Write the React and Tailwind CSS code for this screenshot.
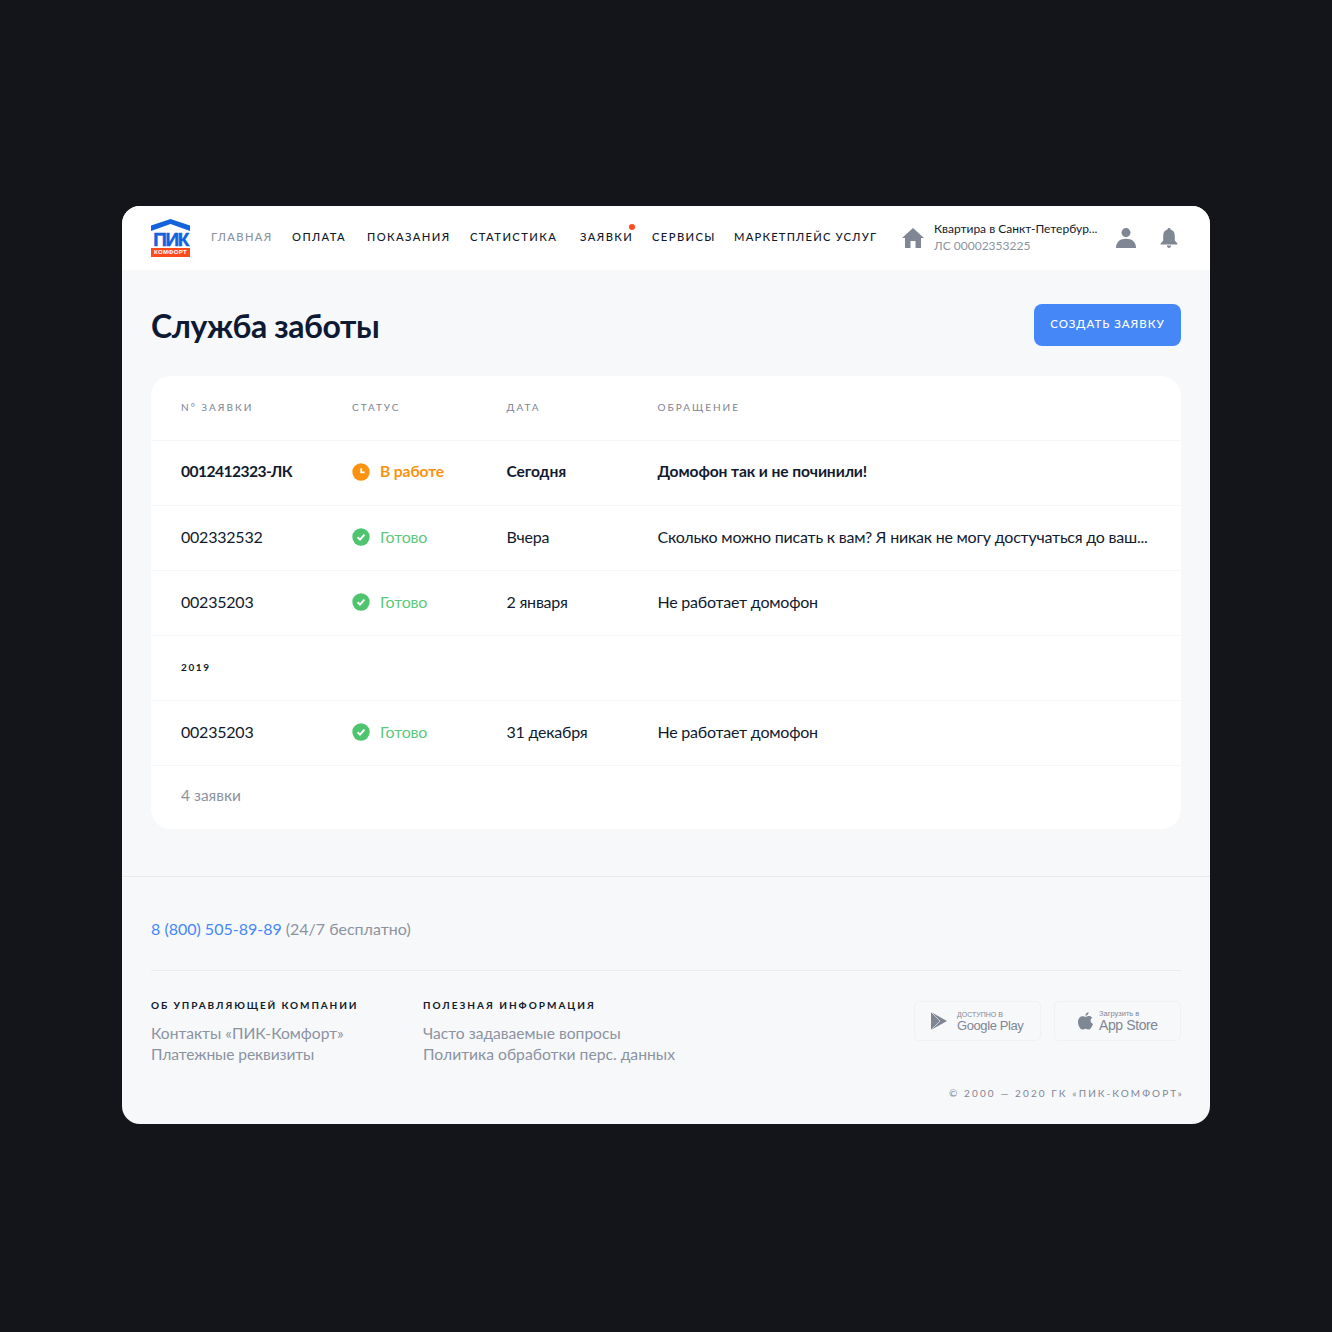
const font = "font-['Lato','Noto_Sans',sans-serif]";

const navItems = [
  { label: 'ГЛАВНАЯ', muted: true, width: 'w-[81px]' },
  { label: 'ОПЛАТА', width: 'w-[75px]' },
  { label: 'ПОКАЗАНИЯ', width: 'w-[103px]' },
  { label: 'СТАТИСТИКА', width: 'w-[110px]' },
  { label: 'ЗАЯВКИ', dot: true, width: 'w-[72px]' },
  { label: 'СЕРВИСЫ', width: 'w-[82px]' },
  { label: 'МАРКЕТПЛЕЙС УСЛУГ', tight: true, width: 'w-[144px]' },
];

function Logo() {
  return (
    <div className="flex w-[39px] shrink-0 flex-col items-center">
      <svg width="39" height="13" viewBox="0 0 39 13" className="block">
        <polygon points="0,6.5 19.5,0 39,6.5 39,12 19.5,5 0,12" fill="#1463dc" />
      </svg>
      <div className="mt-[1px] h-[14px] text-[19px] leading-[14px] font-bold tracking-[-1.4px] text-[#1463dc] [-webkit-text-stroke:0.5px_#1463dc] font-['Liberation_Sans',sans-serif]">ПИК</div>
      <div className="mt-[1px] h-[9px] w-[39px] bg-[#ff4a1c] text-center text-[6px] leading-[9px] font-bold tracking-[0.3px] text-white font-['Liberation_Sans',sans-serif]">КОМФОРТ</div>
    </div>
  );
}

function StatusIcon({ kind }) {
  if (kind === 'work') {
    return (
      <svg width="18" height="18" viewBox="0 0 18 18" className="shrink-0">
        <circle cx="9" cy="9" r="8.7" fill="#fb9210" />
        <path d="M9.2 5.2 V9.4 H12.6" fill="none" stroke="#fff" strokeWidth="1.8" />
      </svg>
    );
  }
  return (
    <svg width="18" height="18" viewBox="0 0 18 18" className="shrink-0">
      <circle cx="9" cy="9" r="8.7" fill="#4fc46f" />
      <path d="M5.6 9.2 L8 11.6 L12.4 6.6" fill="none" stroke="#fff" strokeWidth="2" />
    </svg>
  );
}

function Row({ id, kind, status, date, text, bold }) {
  return (
    <div className={`flex h-[65px] items-center border-t border-[#f4f5f7] px-[30px] whitespace-nowrap text-[#111a2e] ${bold ? 'pb-[2px] text-[15.6px] font-bold tracking-[-0.1px]' : 'pb-[3px] text-[16px] tracking-[-0.22px]'}`}>
      <div className={`w-[171px] shrink-0 ${bold ? 'tracking-[-0.55px]' : ''}`}>{id}</div>
      <div className={`flex w-[154.5px] shrink-0 items-center gap-[10px] ${kind === 'work' ? 'text-[#fb9210]' : 'text-[#5cc97c]'}`}>
        <StatusIcon kind={kind} />
        <span>{status}</span>
      </div>
      <div className="w-[151px] shrink-0">{date}</div>
      <div>{text}</div>
    </div>
  );
}

function Caption({ className, children }) {
  return <div className={`text-[10px] tracking-[2px] text-[#7c8493] ${className}`}>{children}</div>;
}

export default function App() {
  return (
    <div className={`flex h-[1332px] items-start justify-center bg-[#13151a] pt-[206px] ${font}`}>
      <div className="h-[918px] w-[1088px] overflow-hidden rounded-[18px] bg-[#f7f8fa]">
        <header className="flex h-[64px] items-center bg-white pl-[29px] pr-[32px]">
          <Logo />
          <nav className="ml-[21px] flex pb-[2px]">
            {navItems.map((item) => (
              <div key={item.label} className={`relative shrink-0 text-[11.2px] font-medium whitespace-nowrap ${item.width} ${item.tight ? 'tracking-[1.2px]' : 'tracking-[1.4px]'} ${item.muted ? 'text-[#8b93a1]' : 'text-[#111a2e]'}`}>
                {item.label}
                {item.dot && <span className="absolute -top-[5px] left-[49px] h-[6px] w-[6px] rounded-full bg-[#ff4a1c]" />}
              </div>
            ))}
          </nav>
          <div className="ml-auto flex items-center">
            <svg width="22" height="20" viewBox="0 0 22 20" className="shrink-0">
              <path d="M11 0 L0 10 H3 V20 H8.5 V13 H13.5 V20 H19 V10 H22 Z" fill="#7f8795" />
            </svg>
            <div className="ml-[10px] w-[170px] shrink-0 pb-[2px] text-[12px] leading-[17px] whitespace-nowrap">
              <div className="text-[#111a2e]">Квартира в Санкт-Петербур...</div>
              <div className="text-[#8b93a1]">ЛС 00002353225</div>
            </div>
            <svg width="20" height="20" viewBox="0 0 20 20" className="ml-[12px] shrink-0">
              <circle cx="10" cy="4.6" r="4.5" fill="#7f8795" />
              <path d="M0 20 C0 14 4 10.8 10 10.8 C16 10.8 20 14 20 20 Z" fill="#7f8795" />
            </svg>
            <svg width="18" height="20" viewBox="0 0 18 20" className="ml-[24px] shrink-0">
              <path d="M9 0 C10 0 10.5 0.6 10.6 1.6 C13.6 2.4 14.8 4.8 14.8 8 V12.4 L17.4 15.6 V16.6 H0.6 V15.6 L3.2 12.4 V8 C3.2 4.8 4.4 2.4 7.4 1.6 C7.5 0.6 8 0 9 0 Z" fill="#7f8795" />
              <path d="M6.8 17.6 H11.2 C11 19.2 10.1 20 9 20 C7.9 20 7 19.2 6.8 17.6 Z" fill="#7f8795" />
            </svg>
          </div>
        </header>

        <main className="border-b border-[#e8eaed] px-[29px] pb-[47px]">
          <div className="flex h-[106px] items-start justify-between pt-[34px]">
            <h1 className="text-[32px] leading-[44px] font-bold tracking-[-0.4px] text-[#0e1a33]">Служба заботы</h1>
            <button className="h-[42px] w-[147px] rounded-[8px] bg-[#4587f7] pb-[2px] text-[11.5px] font-medium tracking-[1px] text-white">СОЗДАТЬ ЗАЯВКУ</button>
          </div>
          <section className="h-[453px] rounded-[20px] bg-white">
            <div className="flex h-[64px] items-center px-[30px] pb-[1px]">
              <Caption className="w-[171px] shrink-0">N° ЗАЯВКИ</Caption>
              <Caption className="w-[154.5px] shrink-0">СТАТУС</Caption>
              <Caption className="w-[151px] shrink-0">ДАТА</Caption>
              <Caption>ОБРАЩЕНИЕ</Caption>
            </div>
            <Row bold id="0012412323-ЛК" kind="work" status="В работе" date="Сегодня" text="Домофон так и не починили!" />
            <Row id="002332532" kind="done" status="Готово" date="Вчера" text="Сколько можно писать к вам? Я никак не могу достучаться до ваш..." />
            <Row id="00235203" kind="done" status="Готово" date="2 января" text="Не работает домофон" />
            <div className="flex h-[65px] items-center border-t border-[#f4f5f7] px-[30px] pb-[2px] text-[10px] font-bold tracking-[1.6px] text-[#111a2e]">2019</div>
            <Row id="00235203" kind="done" status="Готово" date="31 декабря" text="Не работает домофон" />
            <div className="flex h-[64px] items-center border-t border-[#f4f5f7] px-[30px] pb-[3px] text-[15.5px] text-[#8b93a1]">4 заявки</div>
          </section>
        </main>

        <footer className="px-[29px]">
          <div className="flex h-[94px] items-center border-b border-[#e8eaed] pt-[10px] text-[16px] text-[#8b93a1]">
            <span className="text-[#4587f7]">8 (800) 505-89-89</span>
            <span className="ml-[4px]">(24/7 бесплатно)</span>
          </div>
          <div className="flex pt-[27px]">
            <div className="w-[272px] shrink-0">
              <div className="text-[10px] font-bold tracking-[1.9px] text-[#111a2e]">ОБ УПРАВЛЯЮЩЕЙ КОМПАНИИ</div>
              <div className="mt-[10px] text-[15.6px] leading-[21px] text-[#8b93a1]">Контакты «ПИК-Комфорт»</div>
              <div className="text-[15.6px] leading-[21px] tracking-[-0.1px] text-[#8b93a1]">Платежные реквизиты</div>
            </div>
            <div>
              <div className="text-[10px] font-bold tracking-[2px] text-[#111a2e]">ПОЛЕЗНАЯ ИНФОРМАЦИЯ</div>
              <div className="mt-[10px] text-[15.6px] leading-[21px] text-[#8b93a1]">Часто задаваемые вопросы</div>
              <div className="text-[15.7px] leading-[21px] text-[#8b93a1]">Политика обработки перс. данных</div>
            </div>
            <div className="ml-auto flex flex-col items-end">
              <div className="mt-[3px] flex gap-[13px]">
                <div className="flex h-[40px] w-[127px] items-center rounded-[5px] border border-[#f0f1f4] pl-[16px]">
                  <svg width="16" height="18" viewBox="0 0 16 18" className="shrink-0">
                    <path d="M0 0 L16 9 L0 18 Z" fill="#7f8795" />
                    <path d="M0 0 L9 9 L0 18" fill="none" stroke="#f7f8fa" strokeWidth="0.6" />
                  </svg>
                  <div className="ml-[10px] text-[#7f8795] font-['Liberation_Sans',sans-serif]">
                    <div className="text-[7px] leading-[8px]">ДОСТУПНО В</div>
                    <div className="text-[13px] leading-[13px] tracking-[-0.4px]">Google Play</div>
                  </div>
                </div>
                <div className="flex h-[40px] w-[127px] items-center rounded-[5px] border border-[#f0f1f4] pl-[23px]">
                  <svg width="15" height="18" viewBox="0 0 15 18" className="shrink-0">
                    <path d="M10.6 0 C10.8 1.8 9.2 3.8 7.4 3.8 C7.2 2 8.9 0.2 10.6 0 Z M7.6 4.8 C8.6 4.8 9.5 4 10.9 4 C12.1 4 13.4 4.6 14.2 5.8 C11.7 7.2 12.1 10.9 15 12 C14.2 14.2 12.5 17.6 10.7 17.6 C9.5 17.6 9 16.8 7.6 16.8 C6.2 16.8 5.6 17.6 4.5 17.6 C2.5 17.6 0 13.6 0 10 C0 6.4 2.2 4.2 4.4 4.2 C5.8 4.2 6.7 4.8 7.6 4.8 Z" fill="#7f8795" />
                  </svg>
                  <div className="ml-[6px] text-[#7f8795] font-['Liberation_Sans',sans-serif]">
                    <div className="text-[7.5px] leading-[8px]">Загрузить в</div>
                    <div className="text-[14px] leading-[14px] tracking-[-0.4px]">App Store</div>
                  </div>
                </div>
              </div>
              <div className="-mr-[3px] mt-[45px] text-[10px] tracking-[2.1px] whitespace-nowrap text-[#7f8795]">© 2000 — 2020 ГК «ПИК-КОМФОРТ»</div>
            </div>
          </div>
        </footer>
      </div>
    </div>
  );
}
